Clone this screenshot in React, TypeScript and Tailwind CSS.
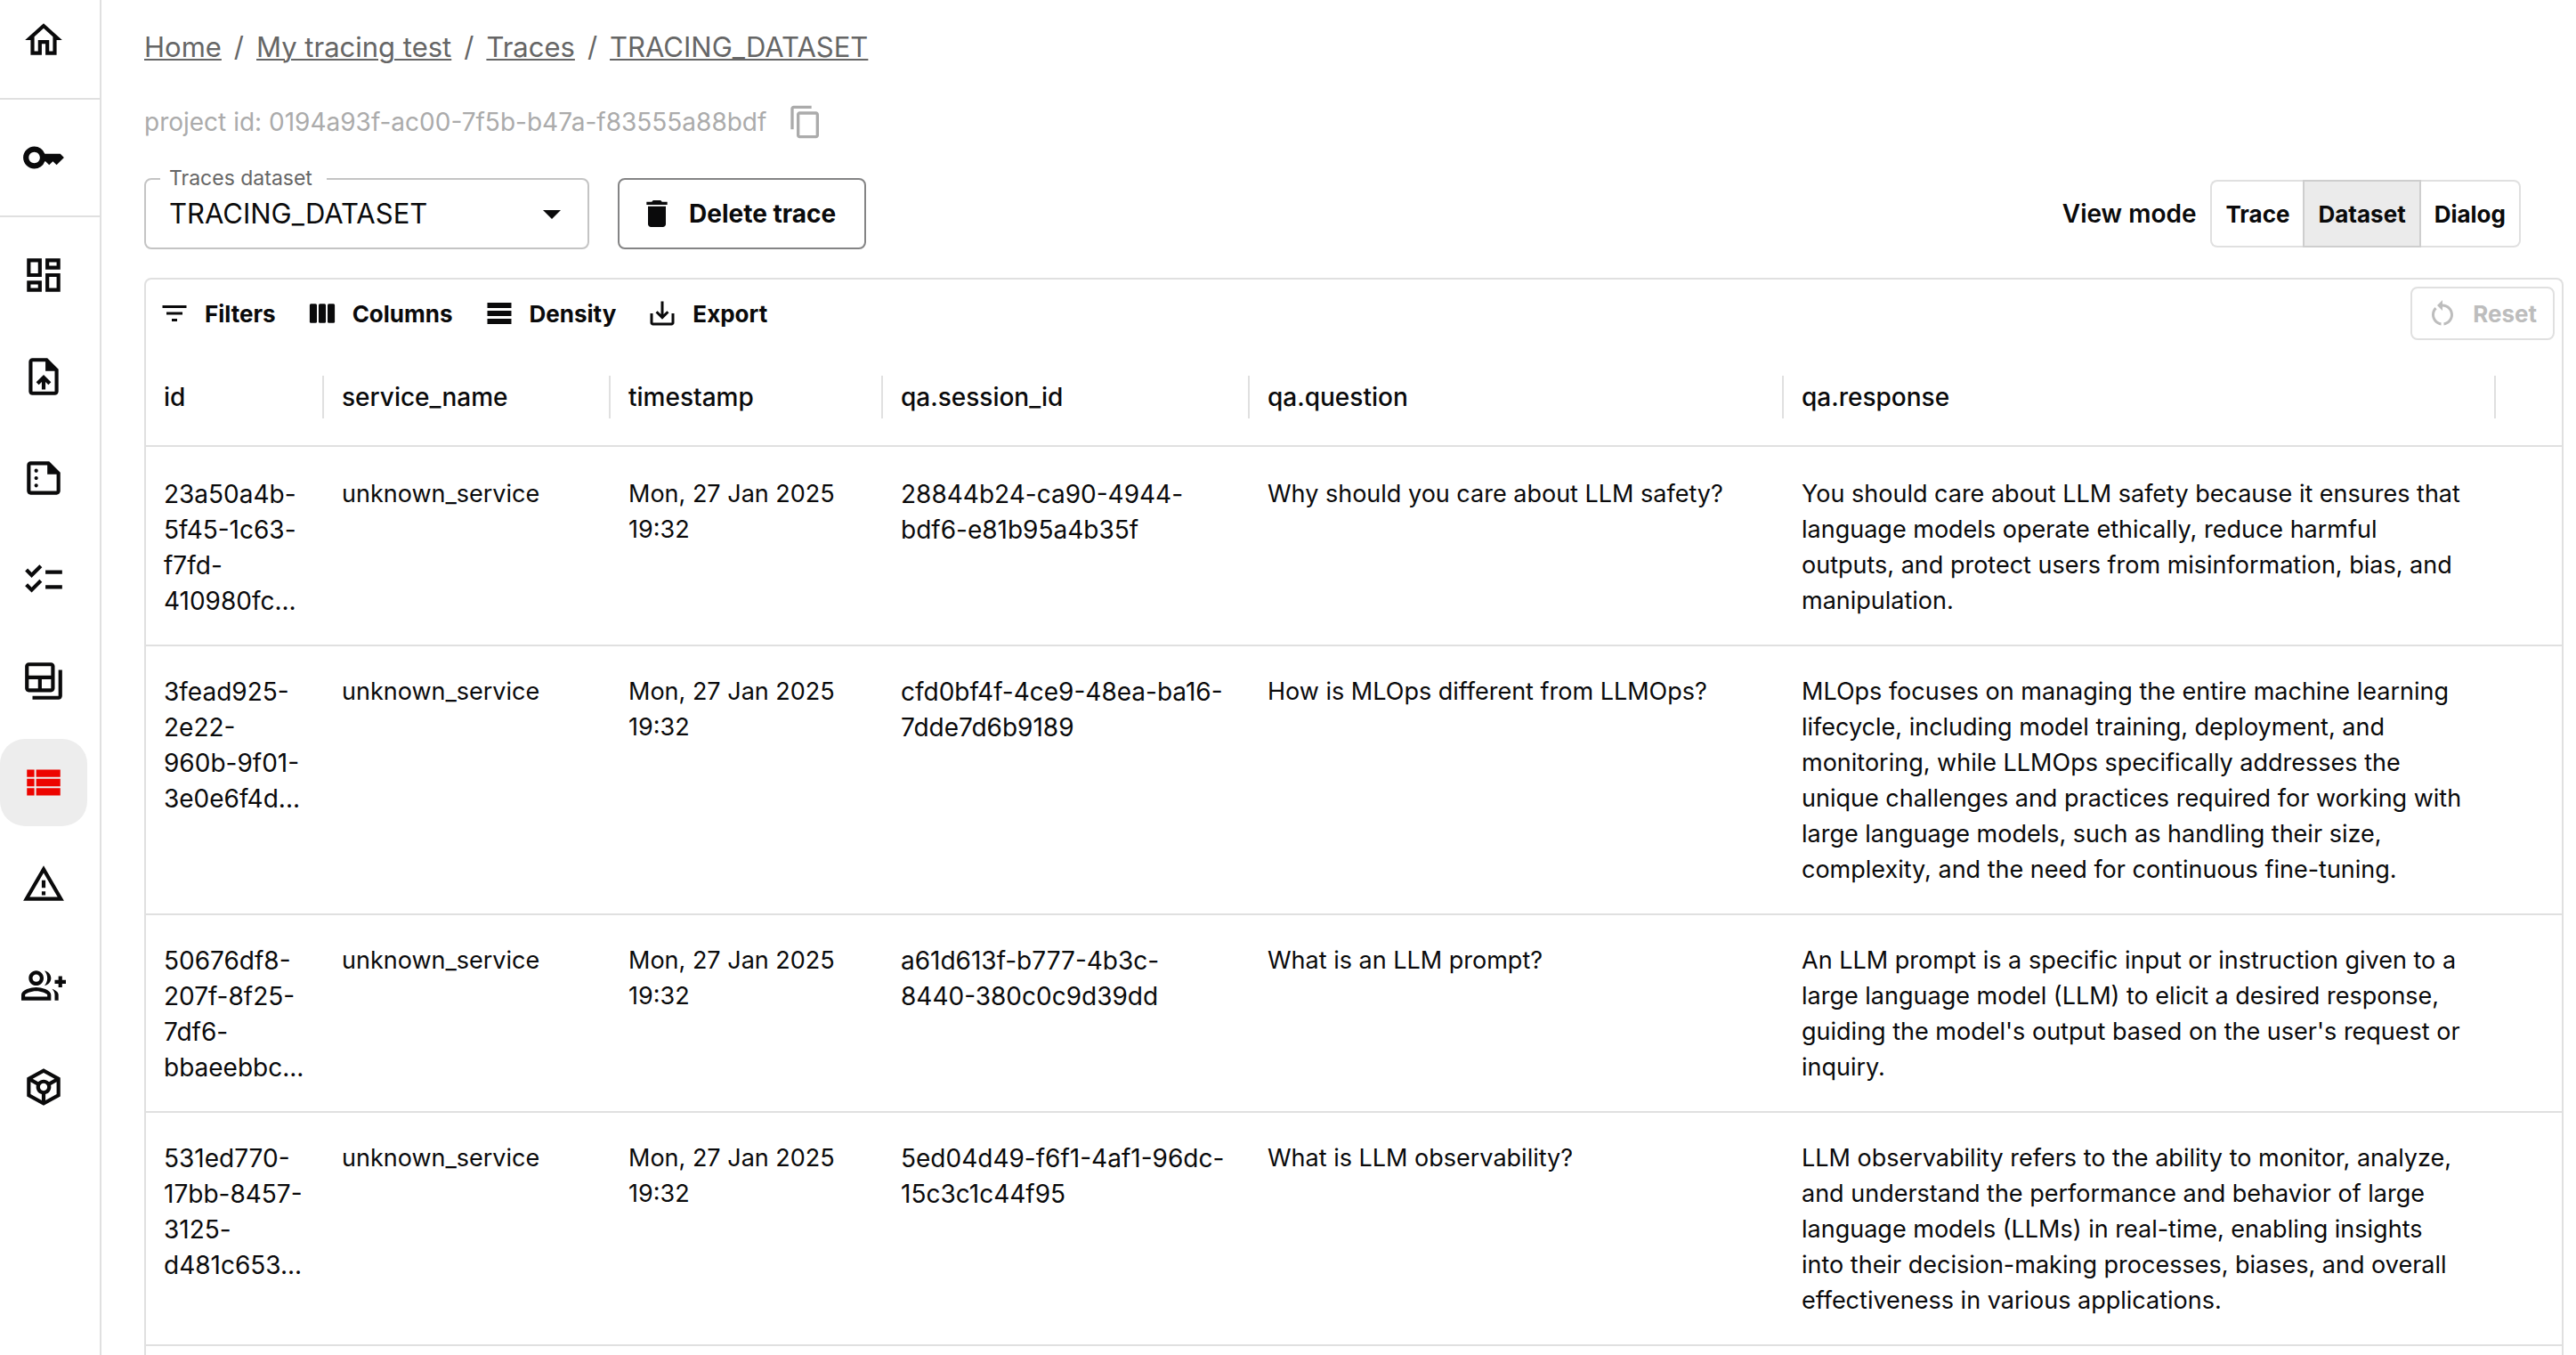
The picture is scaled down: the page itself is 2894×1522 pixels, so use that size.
import React, { useState } from "react";
import {
  MdArrowDropDown,
  MdChecklist,
  MdContentCopy,
  MdDelete,
  MdFilterList,
  MdKey,
  MdOutlineBackupTable,
  MdOutlineDashboard,
  MdOutlineGroupAdd,
  MdOutlineHome,
  MdOutlineSummarize,
  MdOutlineToken,
  MdOutlineUploadFile,
  MdOutlineWarningAmber,
  MdRestartAlt,
  MdSaveAlt,
  MdViewList,
} from "react-icons/md";

interface TraceRow {
  id: string;
  service: string;
  timestamp: string;
  sessionId: string;
  question: string;
  response: string;
}

const rows: TraceRow[] = [
  {
    id: "23a50a4b-5f45-1c63-f7fd-410980fc...",
    service: "unknown_service",
    timestamp: "Mon, 27 Jan 2025 19:32",
    sessionId: "28844b24-ca90-4944-bdf6-e81b95a4b35f",
    question: "Why should you care about LLM safety?",
    response:
      "You should care about LLM safety because it ensures that language models operate ethically, reduce harmful outputs, and protect users from misinformation, bias, and manipulation.",
  },
  {
    id: "3fead925-2e22-960b-9f01-3e0e6f4d...",
    service: "unknown_service",
    timestamp: "Mon, 27 Jan 2025 19:32",
    sessionId: "cfd0bf4f-4ce9-48ea-ba16-7dde7d6b9189",
    question: "How is MLOps different from LLMOps?",
    response:
      "MLOps focuses on managing the entire machine learning lifecycle, including model training, deployment, and monitoring, while LLMOps specifically addresses the unique challenges and practices required for working with large language models, such as handling their size, complexity, and the need for continuous fine-tuning.",
  },
  {
    id: "50676df8-207f-8f25-7df6-bbaeebbc...",
    service: "unknown_service",
    timestamp: "Mon, 27 Jan 2025 19:32",
    sessionId: "a61d613f-b777-4b3c-8440-380c0c9d39dd",
    question: "What is an LLM prompt?",
    response:
      "An LLM prompt is a specific input or instruction given to a large language model (LLM) to elicit a desired response, guiding the model's output based on the user's request or inquiry.",
  },
  {
    id: "531ed770-17bb-8457-3125-d481c653...",
    service: "unknown_service",
    timestamp: "Mon, 27 Jan 2025 19:32",
    sessionId: "5ed04d49-f6f1-4af1-96dc-15c3c1c44f95",
    question: "What is LLM observability?",
    response:
      "LLM observability refers to the ability to monitor, analyze, and understand the performance and behavior of large language models (LLMs) in real-time, enabling insights into their decision-making processes, biases, and overall effectiveness in various applications.",
  },
];

const columns = [
  { name: "id", width: "w-[200px]" },
  { name: "service_name", width: "w-[322px]" },
  { name: "timestamp", width: "w-[306px]" },
  { name: "qa.session_id", width: "w-[412px]" },
  { name: "qa.question", width: "w-[600px]" },
  { name: "qa.response", width: "w-[800px]" },
];

const navItems = [
  { label: "Dashboard", icon: MdOutlineDashboard },
  { label: "Upload", icon: MdOutlineUploadFile },
  { label: "Reports", icon: MdOutlineSummarize },
  { label: "Test suites", icon: MdChecklist },
  { label: "Datasets", icon: MdOutlineBackupTable },
  { label: "Traces", icon: MdViewList },
  { label: "Alerts", icon: MdOutlineWarningAmber },
  { label: "Members", icon: MdOutlineGroupAdd },
  { label: "Models", icon: MdOutlineToken },
];

const breadcrumbs = ["Home", "My tracing test", "Traces", "TRACING_DATASET"];
const viewModes = ["Trace", "Dataset", "Dialog"];

function ColumnsIcon() {
  return (
    <svg viewBox="0 0 24 24" className="size-9" fill="currentColor" aria-hidden="true">
      <rect x="2.6" y="4.8" width="5.4" height="14.4" rx="1" />
      <rect x="9.3" y="4.8" width="5.4" height="14.4" rx="1" />
      <rect x="16" y="4.8" width="5.4" height="14.4" rx="1" />
    </svg>
  );
}

function DensityIcon() {
  return (
    <svg viewBox="0 0 24 24" className="size-9" fill="currentColor" aria-hidden="true">
      <path d="M21 8H3V4h18v4zm0 2H3v4h18v-4zm0 6H3v4h18v-4z" />
    </svg>
  );
}

const toolbar = [
  { label: "Filters", icon: <MdFilterList className="size-9" /> },
  { label: "Columns", icon: <ColumnsIcon /> },
  { label: "Density", icon: <DensityIcon /> },
  { label: "Export", icon: <MdSaveAlt className="size-9" /> },
];

function NavButton({ label, icon: Icon, active = false }: { label: string; icon: React.ElementType; active?: boolean }) {
  return (
    <button
      aria-label={label}
      className={`flex size-[98px] shrink-0 items-center justify-center rounded-[28px] ${
        active ? "bg-[#ededed] text-[#ed0400]" : ""
      }`}
    >
      <Icon className="size-[50px]" />
    </button>
  );
}

function Sidebar() {
  return (
    <aside className="flex w-[114px] shrink-0 flex-col border-r-2 border-[#e0e0e0]">
      <div className="flex h-28 items-end border-b-2 border-[#e0e0e0] pb-4">
        <NavButton label="Home" icon={MdOutlineHome} />
      </div>
      <div className="border-b-2 border-[#e0e0e0] py-4">
        <NavButton label="API keys" icon={MdKey} />
      </div>
      <nav className="flex flex-col gap-4 py-4">
        {navItems.map((item) => (
          <NavButton key={item.label} label={item.label} icon={item.icon} active={item.label === "Traces"} />
        ))}
      </nav>
    </aside>
  );
}

function TraceTable() {
  return (
    <table className="w-full table-fixed border-separate border-spacing-0 text-[27px] leading-10">
      <thead>
        <tr className="h-28 text-left text-[28px]">
          {columns.map((col) => (
            <th key={col.name} className={`${col.width} border-b-2 border-[#e0e0e0] p-0 pt-0.5 font-medium`}>
              <div className="flex h-12 items-center border-r-2 border-[#e0e0e0] pl-5">{col.name}</div>
            </th>
          ))}
          <th aria-hidden="true" className="border-b-2 border-[#e0e0e0]" />
        </tr>
      </thead>
      <tbody>
        {rows.map((row) => (
          <tr
            key={row.id}
            className="align-top *:border-t-2 *:border-[#e0e0e0] *:pt-[31px] *:pb-[29px] *:pl-5 first:*:border-transparent last:*:border-b-2 last:*:border-b-[#e0e0e0]"
          >
            <td className="pr-5 text-[28px]">{row.id}</td>
            <td className="pr-5">{row.service}</td>
            <td className="pr-5">{row.timestamp}</td>
            <td className="pr-5 text-[28px]">{row.sessionId}</td>
            <td className="pr-5">{row.question}</td>
            <td className="pr-[34px]">{row.response}</td>
            <td aria-hidden="true" />
          </tr>
        ))}
      </tbody>
    </table>
  );
}

export default function App() {
  const [viewMode, setViewMode] = useState("Dataset");

  return (
    <div className="flex h-screen overflow-hidden bg-white font-['Inter',sans-serif] text-[#0a0a0b]">
      <Sidebar />

      <main className="flex min-w-0 flex-1 flex-col pt-[29px] pr-3.5 pl-12">
        {/* Breadcrumbs */}
        <nav aria-label="Breadcrumb">
          <ol className="flex gap-3.5 text-[31px] leading-[48px] text-[#666]">
            {breadcrumbs.map((crumb, i) => (
              <li key={crumb} className="flex gap-3.5">
                {i > 0 && <span aria-hidden="true">/</span>}
                <a href="#" className="underline decoration-2 underline-offset-2">
                  {crumb}
                </a>
              </li>
            ))}
          </ol>
        </nav>

        <div className="mt-10 flex items-center gap-6 text-[28px] leading-10 text-[#ababab]">
          <p>project id: 0194a93f-ac00-7f5b-b47a-f83555a88bdf</p>
          <button aria-label="Copy project id">
            <MdContentCopy className="size-10" />
          </button>
        </div>

        {/* Controls */}
        <div className="mt-[43px] flex items-center justify-between pr-12">
          <div className="flex gap-8">
            <div className="relative w-[500px]">
              <select
                id="traces-dataset"
                className="h-20 w-full appearance-none rounded-lg border-2 border-[#c4c4c4] bg-white pl-[26px] text-[31px]"
              >
                <option>TRACING_DATASET</option>
              </select>
              <label
                htmlFor="traces-dataset"
                className="absolute -top-3 left-[18px] bg-white pr-4 pl-2.5 text-[23px] leading-6 text-[#666]"
              >
                Traces dataset
              </label>
              <MdArrowDropDown className="pointer-events-none absolute top-4 right-[18px] size-12" />
            </div>
            <button className="flex h-20 items-center gap-4 rounded-lg border-2 border-[#848485] pr-8 pl-[22px] text-[28px] font-bold">
              <MdDelete className="size-10" />
              Delete trace
            </button>
          </div>

          <div className="flex items-center gap-4">
            <span id="view-mode" className="text-[28px] font-semibold">
              View mode
            </span>
            <div role="group" aria-labelledby="view-mode" className="flex h-[76px] text-[26px] font-bold">
              {viewModes.map((mode) => (
                <button
                  key={mode}
                  aria-pressed={viewMode === mode}
                  onClick={() => setViewMode(mode)}
                  className={`border-2 px-[15px] first:rounded-l-lg first:border-r-0 last:rounded-r-lg last:border-l-0 ${
                    viewMode === mode ? "border-[#cecece] bg-[#ebebeb]" : "border-[#e0e0e0]"
                  }`}
                >
                  {mode}
                </button>
              ))}
            </div>
          </div>
        </div>

        {/* Data grid */}
        <section className="mt-8 min-h-0 flex-1 overflow-hidden rounded-t-lg border-2 border-b-0 border-[#e0e0e0]">
          <div className="flex items-center justify-between px-1 py-2 pr-2">
            <div className="flex gap-3.5">
              {toolbar.map((tool) => (
                <button key={tool.label} className="flex items-center gap-4 px-2.5 text-[26px] font-bold">
                  {tool.icon}
                  {tool.label}
                </button>
              ))}
            </div>
            <button
              disabled
              className="flex h-[60px] items-center gap-4 rounded-lg border-2 border-[#e0e0e0] pr-[18px] pl-4 text-[26px] font-bold text-[#bdbdbd]"
            >
              <MdRestartAlt className="size-9" />
              Reset
            </button>
          </div>
          <TraceTable />
        </section>
      </main>
    </div>
  );
}
